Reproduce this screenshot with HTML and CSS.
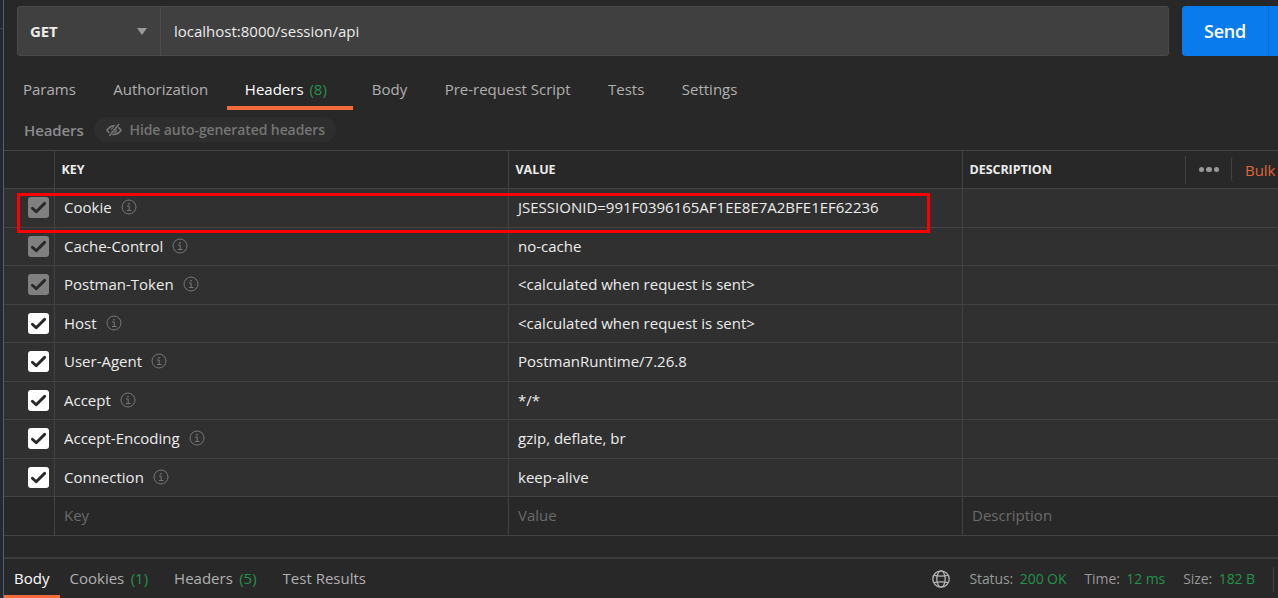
FILE: index.html
```html
<!DOCTYPE html>
<html lang="en">
<head>
<meta charset="utf-8">
<title>Request</title>
<link rel="stylesheet" href="styles.css">
</head>
<body>
<svg class="defs" width="0" height="0" aria-hidden="true">
  <symbol id="info" viewBox="0 0 16 16"><circle cx="8" cy="8" r="7" fill="none" stroke="currentColor"/><path d="M6 7h2.2v4.5M6 11.5h4.5" fill="none" stroke="currentColor"/><path d="M7.3 4h1.4v1.4H7.3z" fill="currentColor"/></symbol>
  <symbol id="check" viewBox="0 0 21 21"><path d="M4.4 11.2l3.8 3.6 8.4-8.4" fill="none" stroke="#282828" stroke-width="2.9" stroke-linecap="round" stroke-linejoin="round"/></symbol>
</svg>
<div class="gutter"><i class="notch"></i></div>
<main class="app">
  <div class="request-bar">
    <div class="url-box">
      <div class="method"><span>GET</span><i class="caret"></i></div>
      <div class="url"><span class="url-text">localhost:8000/session/api</span></div>
    </div>
    <div class="send"><span class="send-label">Send</span></div>
  </div>
  <nav class="tabs">
    <span class="tab">Params</span>
    <span class="tab w-auth">Authorization</span>
    <span class="tab active">Headers <em>(8)</em></span>
    <span class="tab">Body</span>
    <span class="tab">Pre-request Script</span>
    <span class="tab">Tests</span>
    <span class="tab">Settings</span>
  </nav>
  <div class="subhead">
    <span class="subtitle">Headers</span>
    <span class="pill">
      <svg width="16" height="14" viewBox="0 0 16 14"><path d="M1 7.2Q4 2.8 8 2.8T15 7.2Q12 11.4 8 11.4T1 7.2z" fill="none" stroke="currentColor" stroke-width="1.8"/><circle cx="8" cy="7" r="3" fill="currentColor"/><path d="M2.8 13L12.6 1" stroke="#2e2e2e" stroke-width="3.4"/><path d="M3.3 13L13 1" stroke="currentColor" stroke-width="1.6"/></svg>
      <span class="pill-label">Hide auto-generated headers</span>
    </span>
  </div>
  <section class="table">
    <div class="row head"><div></div><div>KEY</div><div>VALUE</div><div class="desc"><span>DESCRIPTION</span><span class="tools"><span class="more"><i></i><i></i><i></i></span><span class="bulk">Bulk</span></span></div></div>
    <div class="row"><div><svg class="box dim"><use href="#check"/></svg></div><div><span>Cookie</span><svg class="info"><use href="#info"/></svg></div><div>JSESSIONID=991F0396165AF1EE8E7A2BFE1EF62236</div><div></div></div>
    <div class="row"><div><svg class="box dim"><use href="#check"/></svg></div><div><span>Cache-Control</span><svg class="info"><use href="#info"/></svg></div><div>no-cache</div><div></div></div>
    <div class="row"><div><svg class="box dim"><use href="#check"/></svg></div><div><span>Postman-Token</span><svg class="info"><use href="#info"/></svg></div><div>&lt;calculated when request is sent&gt;</div><div></div></div>
    <div class="row"><div><svg class="box"><use href="#check"/></svg></div><div><span>Host</span><svg class="info"><use href="#info"/></svg></div><div>&lt;calculated when request is sent&gt;</div><div></div></div>
    <div class="row"><div><svg class="box"><use href="#check"/></svg></div><div><span>User-Agent</span><svg class="info"><use href="#info"/></svg></div><div>PostmanRuntime/7.26.8</div><div></div></div>
    <div class="row"><div><svg class="box"><use href="#check"/></svg></div><div><span>Accept</span><svg class="info"><use href="#info"/></svg></div><div>*/*</div><div></div></div>
    <div class="row"><div><svg class="box"><use href="#check"/></svg></div><div><span>Accept-Encoding</span><svg class="info"><use href="#info"/></svg></div><div>gzip, deflate, br</div><div></div></div>
    <div class="row"><div><svg class="box"><use href="#check"/></svg></div><div><span>Connection</span><svg class="info"><use href="#info"/></svg></div><div>keep-alive</div><div></div></div>
    <div class="row blank"><div></div><div>Key</div><div>Value</div><div>Description</div></div>
    <div class="highlight"></div>
  </section>
  <footer class="response">
    <span class="rtab on">Body</span>
    <span class="rtab">Cookies <em>(1)</em></span>
    <span class="rtab">Headers <em>(5)</em></span>
    <span class="rtab">Test Results</span>
    <div class="stats">
      <svg class="globe" viewBox="0 0 18 18" fill="none" stroke="currentColor" stroke-width="1.3"><circle cx="9" cy="9" r="8.2"/><ellipse cx="9" cy="9" rx="4.2" ry="8.2"/><path d="M2 5.4Q9 7 16 5.4M2 12.6Q9 11 16 12.6"/></svg>
      <span class="stat">Status: <em>200 OK</em></span>
      <span class="stat">Time: <em>12 ms</em></span>
      <span class="stat">Size: <em>182 B</em></span>
      <i class="rule"></i>
    </div>
  </footer>
</main>
</body>
</html>
```
FILE: styles.css
```css
* { box-sizing: border-box; }
body {
  margin: 0;
  height: 598px;
  display: flex;
  overflow: hidden;
  background: #282828;
  color: #ececec;
  font: 15px/20px "Open Sans", "Noto Sans", sans-serif;
  white-space: nowrap;
}
em { font-style: normal; color: #24924a; }
.defs { position: absolute; }
.gutter { width: 4px; flex: none; border-right: 1px solid #46628f; }
.notch { display: block; width: 3px; height: 1px; margin-top: 28px; background: #444; }
.app { width: 1274px; flex: none; display: flex; flex-direction: column; }
.app > * { flex: none; }

.request-bar { display: flex; gap: 13px; padding: 6px 0 0 13px; }
.url-box { width: 1152px; flex: none; height: 50px; display: flex; background: #404040; border: 1px solid #4a4a4a; border-radius: 3px; }
.method { width: 143px; display: flex; align-items: center; justify-content: space-between; padding: 0 13px 0 12px; border-right: 1px solid #4c4c4c; font-weight: 700; letter-spacing: -.1px; }
.caret { border: 5px solid transparent; border-top: 7px solid #999; border-bottom: 0; }
.url { display: flex; align-items: center; padding-left: 13px; font-weight: 500; }
.send { width: 100px; flex: none; height: 50px; display: flex; align-items: center; padding-left: 22px; border-radius: 4px 0 0 4px; background: linear-gradient(90deg, #097bed 86px, #0868cb 86px 87px, #097bed 87px); color: #fff; font-weight: 600; font-size: 18px; letter-spacing: -.2px; }

.tabs { display: flex; height: 54px; padding: 14px 0 0 19px; color: #b0b0b0; }
.tab { height: 40px; line-height: 38px; margin-right: 37.4px; }
.tab.w-auth { margin-right: 18.7px; }
.tab.active { width: 126px; margin-right: 19px; padding-left: 18px; color: #fff; font-weight: 500; border-bottom: 4px solid #f26b3a; }
.tab em { margin-left: 2px; font-weight: 400; }

.subhead { height: 40px; display: flex; align-items: flex-start; gap: 10px; padding: 7px 0 0 20px; }
.subtitle { width: 60px; line-height: 27px; font-weight: 600; letter-spacing: -.1px; color: #8c8c8c; }
.pill { height: 25px; width: 242px; display: flex; align-items: center; gap: 7.5px; padding-left: 12px; border-radius: 13px; background: #2e2e2e; color: #757575; font-weight: 600; font-size: 14px; letter-spacing: -.1px; }

.table { position: relative; border-top: 1px solid #434343; }
.row { display: grid; grid-template-columns: 51px 454px 454px 315px; height: 38px; background: #303030; border-bottom: 1px solid #434343; font-weight: 500; }
.row:nth-child(even) { height: 39px; }
.row > div { display: flex; align-items: center; border-right: 1px solid #434343; padding: 0 0 1px 9px; }
.row:nth-child(even) > div { padding-bottom: 2px; }
.row > div:last-child { border-right: 0; }
.row > div:first-child { padding-left: 0; padding-right: 5px; justify-content: flex-end; }
.row:nth-child(even) > div:first-child { padding-bottom: 1px; }
.row.head { background: #282828; font-size: 12.5px; font-weight: 700; letter-spacing: -.05px; }
.row.head > div { padding: 0 0 0 6.5px; }
.row.blank { background: #282828; color: #6b6b6b; font-weight: 400; }
.desc { justify-content: space-between; }
.tools { display: flex; align-items: center; width: 93px; border-left: 1px solid #434343; height: 28px; }
.more { display: flex; gap: 2px; width: 45px; padding-left: 12.5px; }
.more i { width: 5.5px; height: 5.5px; border-radius: 50%; background: #999; }
.bulk { height: 25px; padding-left: 13px; border-left: 1px solid #434343; border-radius: 3px; color: #de6538; font: 400 15px/27px "Open Sans", sans-serif; }
.box { width: 21px; height: 21px; border-radius: 3px; background: #fff; }
.box.dim { background: #808080; }
.info { width: 16px; height: 16px; margin-left: 9px; color: #777; }
.highlight { position: absolute; left: 13px; top: 42px; width: 913px; height: 40px; border: 3px solid #f00; }

.response { display: flex; height: 42px; margin-top: 21px; border-top: 2px solid #3c3c3c; color: #b0b0b0; }
.rtab { height: 39px; line-height: 39px; margin-right: 26px; }
.rtab em { margin-left: 2.5px; }
.rtab.on { width: 56px; padding-left: 10px; margin-right: 9.5px; border-bottom: 3px solid #f26b3a; color: #fff; font-weight: 500; }
.stats { display: flex; align-items: center; height: 40px; margin-left: auto; font-size: 14px; color: #999; }
.globe { width: 18px; height: 18px; margin-right: 19px; color: #b5b5b5; }
.stat { margin-right: 18px; letter-spacing: -.08px; }
.stat em { margin-left: 3px; }
.rule { width: 1px; height: 25px; margin-right: 4px; background: #434343; }
```
